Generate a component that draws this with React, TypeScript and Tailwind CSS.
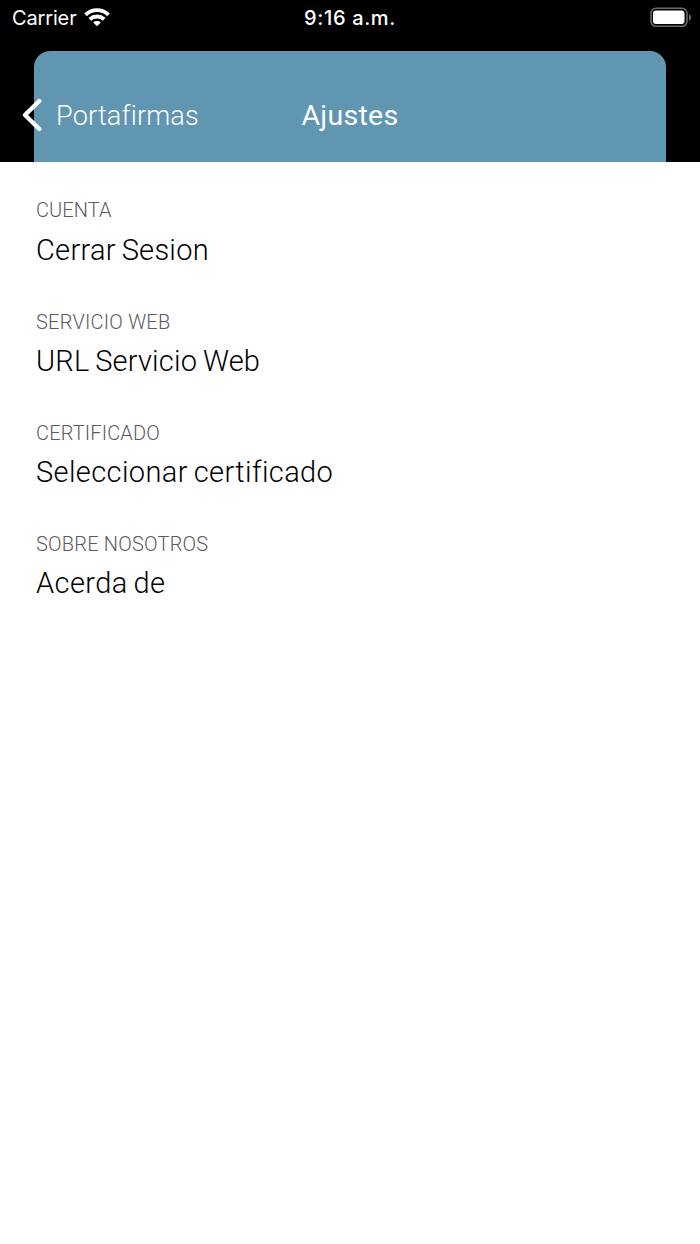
import React from "react";

const sections = [
  { title: "CUENTA", item: "Cerrar Sesion", titleClass: "tracking-[0.1px]", itemClass: "tracking-[0.28px]" },
  { title: "SERVICIO WEB", item: "URL Servicio Web", titleClass: "mt-px tracking-[0.22px]", itemClass: "tracking-[0.2px]" },
  { title: "CERTIFICADO", item: "Seleccionar certificado", titleClass: "mt-px tracking-[0.15px]", itemClass: "tracking-[0.38px]" },
  { title: "SOBRE NOSOTROS", item: "Acerda de", titleClass: "mt-px tracking-[0.2px]", itemClass: "tracking-[0.4px]" },
];

export default function App() {
  return (
    <div className="flex h-[1244px] w-[700px] flex-col overflow-hidden bg-white font-['Roboto',sans-serif] [font-variant-ligatures:none]">
      <div className="flex h-[162px] flex-col bg-black text-white">
        <div className="grid h-[51px] grid-cols-3 items-start px-3 font-['Inter',sans-serif] text-[20px] leading-[36px]">
          <div className="flex items-center gap-[7px]">
            <span className="tracking-[-0.15px]">Carrier</span>
            <svg className="mt-[-2px]" width="26" height="20" viewBox="0 0 26 20" fill="none" stroke="white" strokeWidth="3.8">
              <path d="M1.5 7.8C8 1.5 18 1.5 24.5 7.8" />
              <path d="M5.8 12.2C10 8.6 16 8.6 20.2 12.2" />
              <path d="M13 19.2L9.2 15.4C11.2 13.5 14.8 13.5 16.8 15.4Z" fill="white" stroke="none" />
            </svg>
          </div>
          <span className="text-center font-medium tracking-[0.65px]">9:16 a.m.</span>
          <svg className="mt-[7px] -mr-1 justify-self-end" width="42" height="22" viewBox="0 0 42 22" fill="none">
            <rect x="1" y="1.3" width="36" height="18" rx="5" stroke="#6b6b6b" strokeWidth="1.6" />
            <rect x="3" y="3.5" width="31.5" height="13.5" rx="3" fill="white" />
            <path d="M39 7.3C41.5 8.3 41.5 12.7 39 13.7Z" fill="#777" />
          </svg>
        </div>
        <div className="mx-[34px] grid flex-1 grid-cols-3 items-center rounded-t-[16px] bg-[#6096b1] pt-[18px]">
          <div className="-ml-3 flex items-center gap-[14px]">
            <svg className="-mt-px" width="20" height="34" viewBox="0 0 20 34" fill="none" stroke="white" strokeWidth="4.4" strokeLinecap="round" strokeLinejoin="round">
              <path d="M17.3 3L3 17L17.3 31" />
            </svg>
            <span className="text-[27px] leading-[40px] font-light tracking-[0.2px]">Portafirmas</span>
          </div>
          <span className="text-center text-[28.5px] leading-[40px] font-normal tracking-[0.3px]">Ajustes</span>
        </div>
      </div>
      <main className="flex flex-col px-9 pt-[34px]">
        {sections.map((s) => (
          <section key={s.title} className="flex h-[111px] flex-col">
            <div className="h-[34px]">
              <h2 className={`inline-block text-[20px] leading-[28px] font-light text-[#5c5c5c] ${s.titleClass}`}>{s.title}</h2>
            </div>
            <p className={`text-[29px] leading-[40px] font-light text-black [word-spacing:-1.5px] ${s.itemClass}`}>{s.item}</p>
          </section>
        ))}
      </main>
    </div>
  );
}
